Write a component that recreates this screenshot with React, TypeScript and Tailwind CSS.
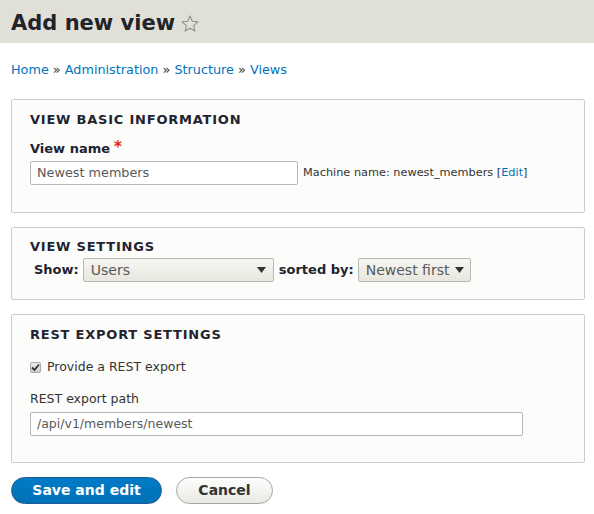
import React from 'react';

const font = { fontFamily: '"DejaVu Sans", Verdana, sans-serif' };

const Legend = ({ children }: { children: React.ReactNode }) => (
  <div className="text-[13px] font-bold uppercase tracking-[0.06em] text-[#222330] leading-4">{children}</div>
);

const Caret = () => (
  <svg width="9" height="6" viewBox="0 0 9 6" className="shrink-0">
    <path d="M0 0 H9 L4.5 6 Z" fill="#333" />
  </svg>
);

export default function App() {
  return (
    <div style={font} className="w-[594px] h-[514px] bg-white text-[#333] overflow-hidden">
      <div className="h-[43px] bg-[#e0e0d8] flex items-center pl-[11px] pt-[4px] gap-[5px]">
        <h1 className="text-[21px] font-bold text-[#232429] leading-none">Add new view</h1>
        <svg width="20" height="20" viewBox="0 0 24 24">
          <path
            d="M12 2.5l2.8 6.3 6.7.6-5.1 4.5 1.5 6.6L12 17.1l-5.9 3.4 1.5-6.6-5.1-4.5 6.7-.6z"
            fill="none"
            stroke="#8f8f84"
            strokeWidth="1.3"
            strokeLinejoin="round"
          />
        </svg>
      </div>

      <div className="px-[11px] pt-[19px] text-[12.8px] text-[#0074bd] leading-4">
        Home <span className="text-[#333]">»</span> Administration <span className="text-[#333]">»</span> Structure{' '}
        <span className="text-[#333]">»</span> Views
      </div>

      <div className="pl-[11px] pt-[21px] flex flex-col gap-[14px]">
        <fieldset className="w-[574px] border border-[#ccc] rounded-[2px] bg-[#fcfcfa] h-[114px] px-[18px] pt-[12px]">
          <Legend>View basic information</Legend>
          <div className="mt-[13px] text-[13px] font-bold text-[#222330] leading-4 flex items-start gap-[4px]">
            View name <span className="text-[#e62600] text-[15px] leading-3">*</span>
          </div>
          <div className="mt-[4px] flex items-center gap-[5px]">
            <div className="w-[268px] h-[24px] border border-[#b8b8b8] rounded-[2px] bg-white px-[6px] flex items-center text-[12.8px] text-[#595959]">
              Newest members
            </div>
            <div className="text-[11.3px] text-[#333]">
              Machine name: newest_members [<span className="text-[#0074bd]">Edit</span>]
            </div>
          </div>
        </fieldset>

        <fieldset className="w-[574px] border border-[#ccc] rounded-[2px] bg-[#fcfcfa] h-[73px] px-[18px] pt-[11px]">
          <Legend>View settings</Legend>
          <div className="mt-[3px] flex items-center text-[13px]">
            <span className="font-bold text-[#222330] ml-[4px] mr-[4px]">Show:</span>
            <div className="w-[191px] h-[24px] border border-[#b8b8b8] rounded-[2px] bg-gradient-to-b from-[#f6f6f3] to-[#e7e7df] pl-[7px] pr-[7px] flex items-center justify-between text-[14px] text-[#595959]">
              <span>Users</span>
              <Caret />
            </div>
            <span className="font-bold text-[#222330] ml-[5px] mr-[4px]">sorted by:</span>
            <div className="w-[113px] h-[24px] border border-[#b8b8b8] rounded-[2px] bg-gradient-to-b from-[#f6f6f3] to-[#e7e7df] pl-[7px] pr-[6px] flex items-center justify-between text-[14px] text-[#595959]">
              <span>Newest first</span>
              <Caret />
            </div>
          </div>
        </fieldset>

        <fieldset className="w-[574px] border border-[#ccc] rounded-[2px] bg-[#fcfcfa] h-[149px] px-[18px] pt-[12px]">
          <Legend>REST export settings</Legend>
          <div className="mt-[16px] flex items-center gap-[6px] text-[12.5px] leading-4">
            <div className="w-[11px] h-[11px] rounded-[2px] border border-[#aaa] bg-gradient-to-b from-[#eee] to-[#ccc] flex items-center justify-center">
              <svg width="9" height="9" viewBox="0 0 9 9">
                <path d="M1 4.5 L3.5 7 L8 1.5" fill="none" stroke="#333" strokeWidth="1.8" />
              </svg>
            </div>
            <span className="text-[#333]">Provide a REST export</span>
          </div>
          <div className="mt-[16px] text-[12.5px] text-[#333] leading-4">REST export path</div>
          <div className="mt-[5px] w-[493px] h-[24px] border border-[#b8b8b8] rounded-[2px] bg-white px-[6px] flex items-center text-[12.5px] text-[#595959]">
            /api/v1/members/newest
          </div>
        </fieldset>
      </div>

      <div className="px-[11px] pt-[14px] flex gap-[14px]">
        <button className="w-[151px] h-[27px] rounded-full bg-gradient-to-b from-[#007bc6] to-[#0071b8] border border-[#1e5c90] text-white text-[14px] font-bold">
          Save and edit
        </button>
        <button className="w-[97px] h-[27px] rounded-full bg-gradient-to-b from-[#fefefe] to-[#e8e8e4] border border-[#a6a6a6] text-[#333] text-[14px] font-bold">
          Cancel
        </button>
      </div>
    </div>
  );
}
